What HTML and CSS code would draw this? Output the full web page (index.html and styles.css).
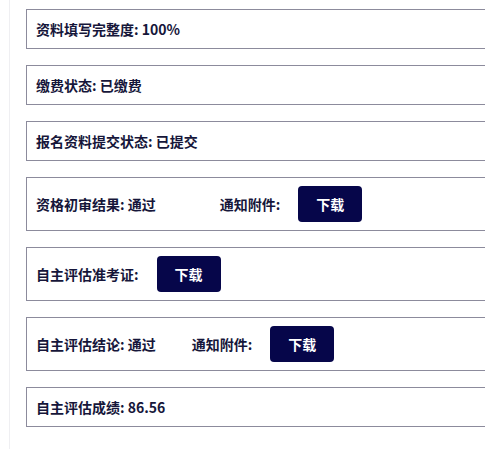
FILE: index.html
```html
<!DOCTYPE html>
<html lang="zh-CN">
<head>
<meta charset="utf-8">
<link rel="stylesheet" href="styles.css">
</head>
<body>
<div class="panel">
  <div class="row"><span class="label">资料填写完整度: 100%</span></div>
  <div class="row"><span class="label">缴费状态: 已缴费</span></div>
  <div class="row"><span class="label">报名资料提交状态: 已提交</span></div>
  <div class="row row-btn">
    <span class="label gap-lg">资格初审结果: 通过</span>
    <span class="label gap-btn">通知附件:</span>
    <button class="btn">下载</button>
  </div>
  <div class="row row-btn">
    <span class="label gap-btn">自主评估准考证:</span>
    <button class="btn">下载</button>
  </div>
  <div class="row row-btn">
    <span class="label gap-md">自主评估结论: 通过</span>
    <span class="label gap-btn">通知附件:</span>
    <button class="btn">下载</button>
  </div>
  <div class="row"><span class="label">自主评估成绩: 86.56</span></div>
</div>
</body>
</html>
```

FILE: styles.css
```css
html, body {
  margin: 0;
  padding: 0;
  overflow: hidden;
  background: #ffffff;
}

body {
  font-family: "Noto Sans CJK SC", "Noto Sans", sans-serif;
  color: #16163a;
  width: 485px;
  height: 449px;
}

.panel {
  margin-left: 9px;
  border-left: 1px solid #efeff2;
  padding: 9px 0 0 16px;
  height: 449px;
  box-sizing: border-box;
}

.row {
  display: flex;
  align-items: center;
  width: 500px;
  height: 40px;
  box-sizing: border-box;
  border: 1px solid #8c8b9c;
  padding-left: 9px;
  margin-bottom: 16px;
}

.row-btn {
  height: 54px;
}

.label {
  font-size: 14px;
  font-weight: 700;
  line-height: 20px;
  white-space: nowrap;
}

.gap-lg { margin-right: 64px; }
.gap-md { margin-right: 36px; }
.gap-btn { margin-right: 18px; }

.btn {
  width: 64px;
  height: 36px;
  border: none;
  border-radius: 4px;
  background: #06064a;
  color: #ffffff;
  font-family: "Noto Sans CJK SC", "Noto Sans", sans-serif;
  font-size: 14px;
  font-weight: 700;
  padding: 0;
}
```
